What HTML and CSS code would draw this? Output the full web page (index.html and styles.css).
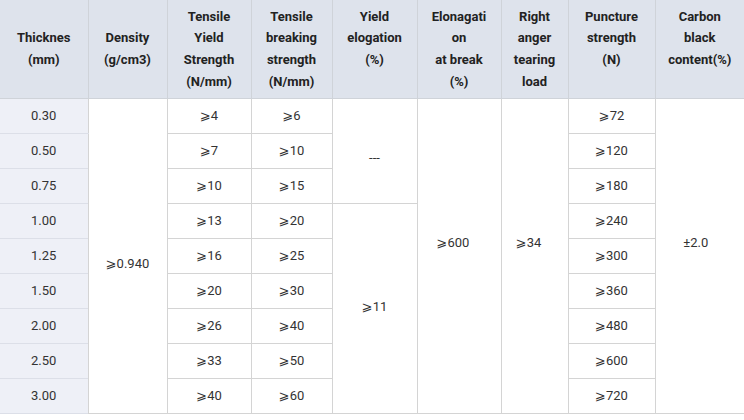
FILE: index.html
```html
<!DOCTYPE html>
<html>
<head>
<meta charset="utf-8">
<link rel="stylesheet" href="styles.css">
</head>
<body>
<table class="spec">
  <colgroup>
    <col class="c1"><col class="c2"><col class="c3"><col class="c4"><col class="c5"><col class="c6"><col class="c7"><col class="c8"><col class="c9">
  </colgroup>
  <thead>
    <tr>
      <th>Thicknes<br>(mm)</th>
      <th>Density<br>(g/cm3)</th>
      <th>Tensile<br>Yield<br>Strength<br>(N/mm)</th>
      <th>Tensile<br>breaking<br>strength<br>(N/mm)</th>
      <th>Yield<br>elogation<br>(%)<br>&nbsp;</th>
      <th>Elonagati<br>on<br>at break<br>(%)</th>
      <th>Right<br>anger<br>tearing<br>load</th>
      <th>Puncture<br>strength<br>(N)<br>&nbsp;</th>
      <th>Carbon<br>black<br>content(%)<br>&nbsp;</th>
    </tr>
  </thead>
  <tbody>
    <tr>
      <td class="first">0.30</td>
      <td rowspan="9" class="density">⩾0.940</td>
      <td>⩾4</td>
      <td>⩾6</td>
      <td rowspan="3" class="dash">---</td>
      <td rowspan="9" class="upper shift6">⩾600</td>
      <td rowspan="9" class="upper shift6">⩾34</td>
      <td>⩾72</td>
      <td rowspan="9" class="upper shift4">±2.0</td>
    </tr>
    <tr><td class="first">0.50</td><td>⩾7</td><td>⩾10</td><td>⩾120</td></tr>
    <tr><td class="first">0.75</td><td>⩾10</td><td>⩾15</td><td>⩾180</td></tr>
    <tr><td class="first">1.00</td><td>⩾13</td><td>⩾20</td><td rowspan="6" class="yield">⩾11</td><td>⩾240</td></tr>
    <tr><td class="first">1.25</td><td>⩾16</td><td>⩾25</td><td>⩾300</td></tr>
    <tr><td class="first">1.50</td><td>⩾20</td><td>⩾30</td><td>⩾360</td></tr>
    <tr><td class="first">2.00</td><td>⩾26</td><td>⩾40</td><td>⩾480</td></tr>
    <tr><td class="first">2.50</td><td>⩾33</td><td>⩾50</td><td>⩾600</td></tr>
    <tr><td class="first">3.00</td><td>⩾40</td><td>⩾60</td><td>⩾720</td></tr>
  </tbody>
</table>
</body>
</html>
```
FILE: styles.css
```css
html, body {
  margin: 0;
  padding: 0;
  background: #ffffff;
}
.spec {
  border-collapse: collapse;
  table-layout: fixed;
  width: 744px;
  font-family: Roboto, "DejaVu Sans", sans-serif;
  color: #333333;
}
.c1 { width: 88px; }
.c2 { width: 79px; }
.c3 { width: 84px; }
.c4 { width: 81px; }
.c5 { width: 85px; }
.c6 { width: 84px; }
.c7 { width: 67px; }
.c8 { width: 87px; }
.c9 { width: 89px; }
.spec th {
  background: #dee3ec;
  font-size: 13px;
  font-weight: bold;
  line-height: 21.7px;
  height: 98px;
  padding: 0 4px;
  text-align: center;
  vertical-align: middle;
  border: 1px solid #cfd3d9;
  border-top: none;
  color: #222222;
}
.spec th:first-child { border-left: none; }
.spec th:last-child { border-right: none; }
.spec td {
  font-size: 13px;
  height: 34px;
  padding: 0 4px;
  text-align: center;
  vertical-align: middle;
  border: 1px solid #d4d4d4;
  background: #ffffff;
  line-height: 20px;
}
.spec td.first {
  background: #eef0f7;
  border-left: none;
  border-color: #dcdfe8;
  border-right-color: #d4d4d4;
}
.spec td:last-child { border-right: none; }
.spec td.density { padding-top: 16px; }
.spec td.dash { padding-top: 14px; }
.spec td.yield { padding-bottom: 4px; }
.spec td.upper { padding-bottom: 26px; }
.spec td.shift6 { padding-right: 16px; }
.spec td.shift4 { padding-right: 12px; }
```
